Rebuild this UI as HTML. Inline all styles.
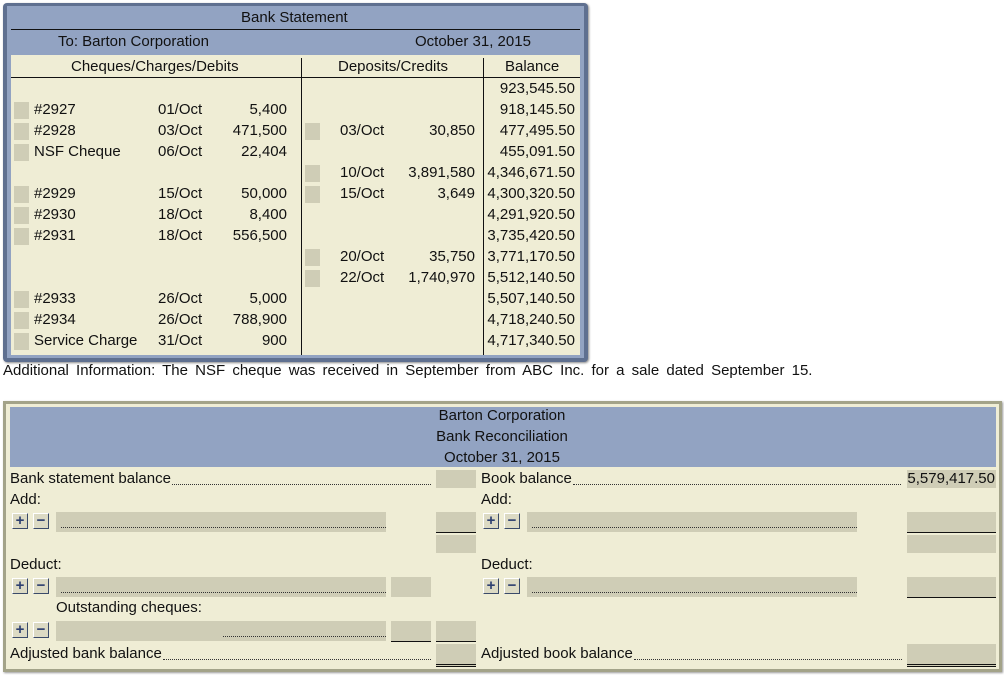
<!DOCTYPE html>
<html><head><meta charset="utf-8">
<style>
*{margin:0;padding:0;box-sizing:border-box}
body{width:1004px;height:675px;background:#fff;position:relative;overflow:hidden;font-family:"Liberation Sans",Arial,sans-serif;font-size:15px;color:#111}
.a{position:absolute}
.t{position:absolute;line-height:16px;white-space:nowrap}
.r{text-align:right}
.sq{position:absolute;width:15px;height:17px;background:#cfcdb6}
.g{position:absolute;background:#cfcdb6}
.ul{border-bottom:1.5px solid #111}
.dl{border-bottom:3px double #111}
.dot{position:absolute;border-bottom:1px dotted #333;height:1px}
.btn{position:absolute;width:16px;height:16px;background:#dcdac4;border-top:1px solid #fff;border-left:1px solid #fff;border-right:1px solid #3a4a6a;border-bottom:1px solid #3a4a6a;color:#2e4070;font-weight:bold;font-size:15px;line-height:13px;text-align:center}
</style></head><body>

<div class="a" style="left:3px;top:3px;width:585px;height:359px;background:#5f7090;border-radius:4px;box-shadow:1px 1px 2px #888"></div>
<div class="a" style="left:7px;top:6px;width:577px;height:352px;background:#92a3c2"></div>
<div class="a" style="left:11px;top:29px;width:569px;height:1px;background:#111"></div>
<div class="a" style="left:11px;top:55px;width:569px;height:300px;background:#efedd5"></div>
<div class="a" style="left:11px;top:77px;width:569px;height:1px;background:#111"></div>
<div class="a" style="left:301px;top:58px;width:1px;height:297px;background:#111"></div>
<div class="a" style="left:483px;top:58px;width:1px;height:297px;background:#111"></div>
<div class="t" style="left:241px;top:10px">Bank Statement</div>
<div class="t" style="left:58px;top:34px">To: Barton Corporation</div>
<div class="t" style="left:415px;top:34px">October 31, 2015</div>
<div class="t" style="left:71px;top:59px">Cheques/Charges/Debits</div>
<div class="t" style="left:338px;top:59px">Deposits/Credits</div>
<div class="t" style="left:505px;top:59px">Balance</div>

<div class="t r" style="right:429px;top:81px">923,545.50</div>

<div class="sq" style="left:14px;top:102px"></div><div class="t" style="left:34px;top:102px">#2927</div><div class="t" style="left:158px;top:102px">01/Oct</div><div class="t r" style="right:717px;top:102px">5,400</div><div class="t r" style="right:429px;top:102px">918,145.50</div>

<div class="sq" style="left:14px;top:123px"></div><div class="t" style="left:34px;top:123px">#2928</div><div class="t" style="left:158px;top:123px">03/Oct</div><div class="t r" style="right:717px;top:123px">471,500</div>
<div class="sq" style="left:305px;top:123px"></div><div class="t" style="left:340px;top:123px">03/Oct</div><div class="t r" style="right:529px;top:123px">30,850</div><div class="t r" style="right:429px;top:123px">477,495.50</div>

<div class="sq" style="left:14px;top:144px"></div><div class="t" style="left:34px;top:144px">NSF Cheque</div><div class="t" style="left:158px;top:144px">06/Oct</div><div class="t r" style="right:717px;top:144px">22,404</div><div class="t r" style="right:429px;top:144px">455,091.50</div>

<div class="sq" style="left:305px;top:165px"></div><div class="t" style="left:340px;top:165px">10/Oct</div><div class="t r" style="right:529px;top:165px">3,891,580</div><div class="t r" style="right:429px;top:165px">4,346,671.50</div>

<div class="sq" style="left:14px;top:186px"></div><div class="t" style="left:34px;top:186px">#2929</div><div class="t" style="left:158px;top:186px">15/Oct</div><div class="t r" style="right:717px;top:186px">50,000</div>
<div class="sq" style="left:305px;top:186px"></div><div class="t" style="left:340px;top:186px">15/Oct</div><div class="t r" style="right:529px;top:186px">3,649</div><div class="t r" style="right:429px;top:186px">4,300,320.50</div>

<div class="sq" style="left:14px;top:207px"></div><div class="t" style="left:34px;top:207px">#2930</div><div class="t" style="left:158px;top:207px">18/Oct</div><div class="t r" style="right:717px;top:207px">8,400</div><div class="t r" style="right:429px;top:207px">4,291,920.50</div>

<div class="sq" style="left:14px;top:228px"></div><div class="t" style="left:34px;top:228px">#2931</div><div class="t" style="left:158px;top:228px">18/Oct</div><div class="t r" style="right:717px;top:228px">556,500</div><div class="t r" style="right:429px;top:228px">3,735,420.50</div>

<div class="sq" style="left:305px;top:249px"></div><div class="t" style="left:340px;top:249px">20/Oct</div><div class="t r" style="right:529px;top:249px">35,750</div><div class="t r" style="right:429px;top:249px">3,771,170.50</div>

<div class="sq" style="left:305px;top:270px"></div><div class="t" style="left:340px;top:270px">22/Oct</div><div class="t r" style="right:529px;top:270px">1,740,970</div><div class="t r" style="right:429px;top:270px">5,512,140.50</div>

<div class="sq" style="left:14px;top:291px"></div><div class="t" style="left:34px;top:291px">#2933</div><div class="t" style="left:158px;top:291px">26/Oct</div><div class="t r" style="right:717px;top:291px">5,000</div><div class="t r" style="right:429px;top:291px">5,507,140.50</div>

<div class="sq" style="left:14px;top:312px"></div><div class="t" style="left:34px;top:312px">#2934</div><div class="t" style="left:158px;top:312px">26/Oct</div><div class="t r" style="right:717px;top:312px">788,900</div><div class="t r" style="right:429px;top:312px">4,718,240.50</div>

<div class="sq" style="left:14px;top:333px"></div><div class="t" style="left:34px;top:333px">Service Charge</div><div class="t" style="left:158px;top:333px">31/Oct</div><div class="t r" style="right:717px;top:333px">900</div><div class="t r" style="right:429px;top:333px">4,717,340.50</div>

<div class="t" style="left:3px;top:363px;word-spacing:3px">Additional Information: The NSF cheque was received in September from ABC Inc. for a sale dated September 15.</div>

<div class="a" style="left:3px;top:401px;width:999px;height:271px;background:#a3a389;box-shadow:1px 1px 2px #999"></div>
<div class="a" style="left:6px;top:404px;width:993px;height:265px;background:#efedd5"></div>
<div class="a" style="left:10px;top:407px;width:986px;height:60px;background:#92a3c2"></div>
<div class="t" style="left:0;width:1004px;text-align:center;top:408px">Barton Corporation</div>
<div class="t" style="left:0;width:1004px;text-align:center;top:429px">Bank Reconciliation</div>
<div class="t" style="left:0;width:1004px;text-align:center;top:450px">October 31, 2015</div>

<div class="t" style="left:10px;top:471px">Bank statement balance</div>
<div class="dot" style="left:172px;top:484px;width:259px"></div>
<div class="g" style="left:436px;top:470px;width:40px;height:18px"></div>
<div class="t" style="left:10px;top:492px">Add:</div>
<div class="btn" style="left:12px;top:513px">+</div><div class="btn" style="left:33px;top:513px">−</div>
<div class="g" style="left:56px;top:512px;width:330px;height:20px"></div>
<div class="dot" style="left:61px;top:527px;width:325px"></div>
<div class="g ul" style="left:436px;top:512px;width:40px;height:21px"></div>
<div class="g" style="left:436px;top:535px;width:40px;height:18px"></div>
<div class="t" style="left:10px;top:557px">Deduct:</div>
<div class="btn" style="left:12px;top:578px">+</div><div class="btn" style="left:33px;top:578px">−</div>
<div class="g" style="left:56px;top:577px;width:330px;height:20px"></div>
<div class="dot" style="left:61px;top:592px;width:325px"></div>
<div class="g" style="left:391px;top:577px;width:40px;height:20px"></div>
<div class="t" style="left:56px;top:600px">Outstanding cheques:</div>
<div class="btn" style="left:12px;top:622px">+</div><div class="btn" style="left:33px;top:622px">−</div>
<div class="g" style="left:56px;top:621px;width:330px;height:20px"></div>
<div class="dot" style="left:223px;top:636px;width:163px"></div>
<div class="g ul" style="left:391px;top:621px;width:40px;height:21px"></div>
<div class="g ul" style="left:436px;top:621px;width:40px;height:21px"></div>
<div class="t" style="left:10px;top:646px">Adjusted bank balance</div>
<div class="dot" style="left:163px;top:659px;width:268px"></div>
<div class="g dl" style="left:436px;top:644px;width:40px;height:23px"></div>

<div class="t" style="left:481px;top:471px">Book balance</div>
<div class="dot" style="left:573px;top:484px;width:328px"></div>
<div class="g" style="left:907px;top:470px;width:89px;height:18px"></div>
<div class="t r" style="right:9px;top:471px">5,579,417.50</div>
<div class="t" style="left:481px;top:492px">Add:</div>
<div class="btn" style="left:483px;top:513px">+</div><div class="btn" style="left:504px;top:513px">−</div>
<div class="g" style="left:527px;top:512px;width:330px;height:20px"></div>
<div class="dot" style="left:532px;top:527px;width:325px"></div>
<div class="g ul" style="left:907px;top:512px;width:89px;height:21px"></div>
<div class="g" style="left:907px;top:535px;width:89px;height:18px"></div>
<div class="t" style="left:481px;top:557px">Deduct:</div>
<div class="btn" style="left:483px;top:578px">+</div><div class="btn" style="left:504px;top:578px">−</div>
<div class="g" style="left:527px;top:577px;width:330px;height:20px"></div>
<div class="dot" style="left:532px;top:592px;width:325px"></div>
<div class="g ul" style="left:907px;top:577px;width:89px;height:21px"></div>
<div class="t" style="left:481px;top:646px">Adjusted book balance</div>
<div class="dot" style="left:634px;top:659px;width:268px"></div>
<div class="g dl" style="left:907px;top:644px;width:89px;height:23px"></div>

</body></html>
